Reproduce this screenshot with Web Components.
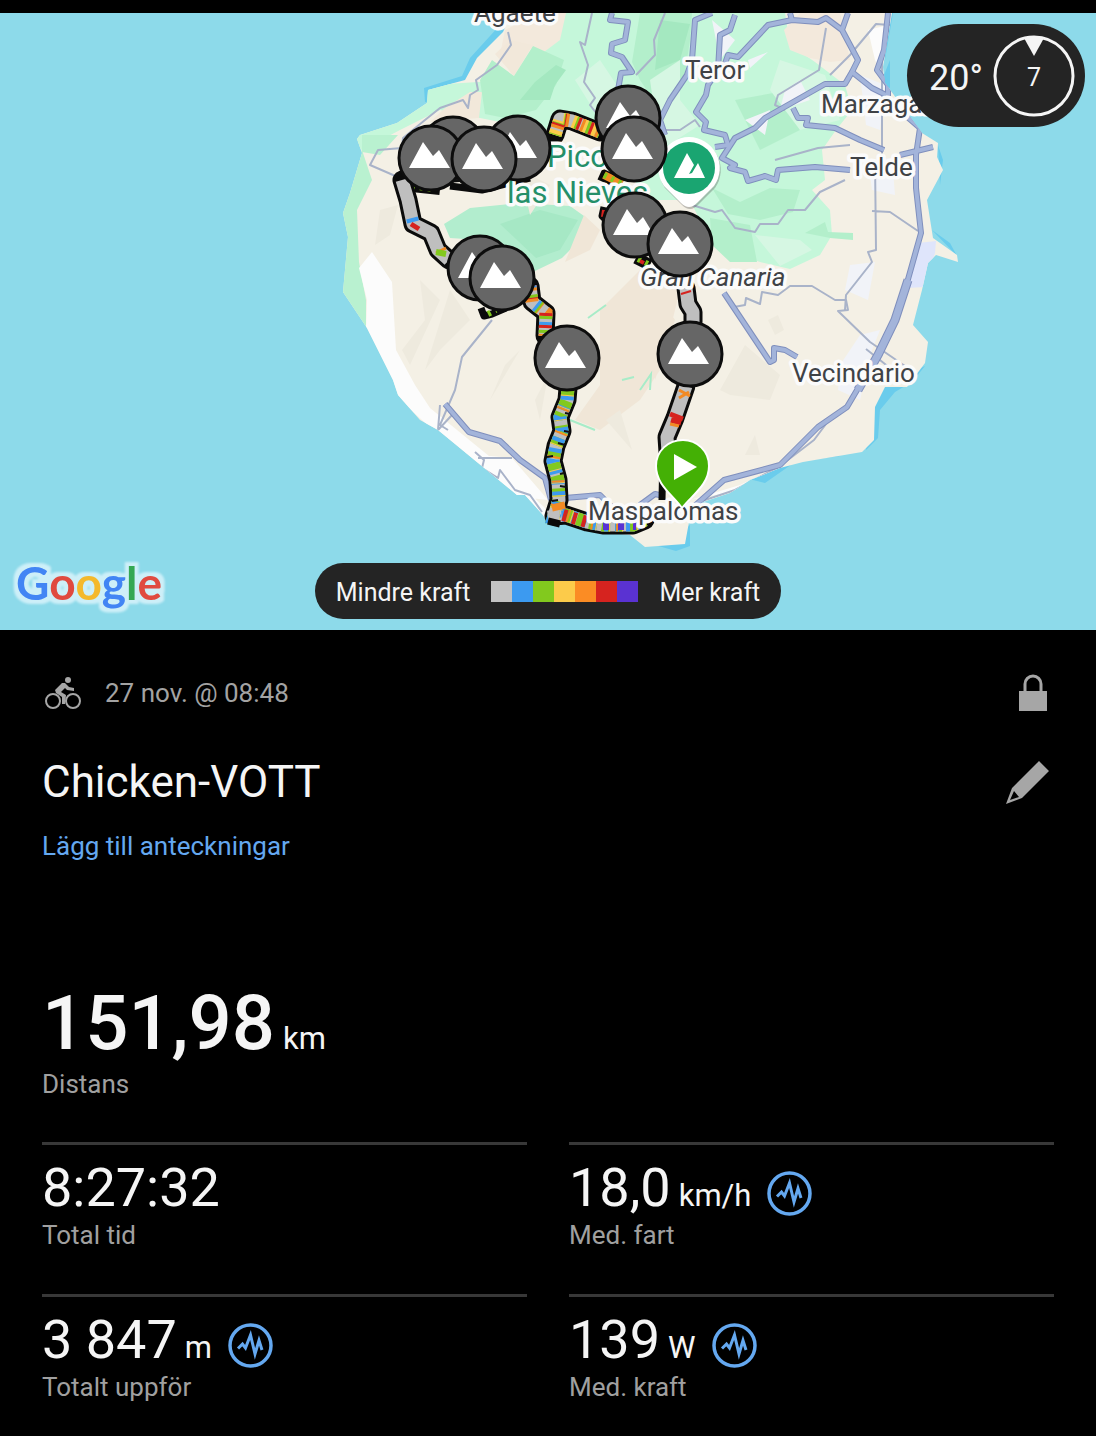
<!DOCTYPE html>
<html lang="sv">
<head>
<meta charset="utf-8">
<meta name="viewport" content="width=device-width, initial-scale=1">
<title>Chicken-VOTT</title>
<style>
  body {
    margin: 0;
    background: #000;
    color: #f5f5f5;
    font-family: Roboto, "Liberation Sans", sans-serif;
  }
</style>
</head>
<body>
<activity-page>
  <activity-map slot="map">
    <weather-badge slot="weather" wind="7">20°</weather-badge>
    <power-legend slot="legend">
      <span slot="less">Mindre kraft</span>
      <span slot="more">Mer kraft</span>
    </power-legend>
  </activity-map>
  <activity-header>
    <span slot="date">27 nov. @ 08:48</span>
    <span slot="title">Chicken-VOTT</span>
    <span slot="notes">Lägg till anteckningar</span>
  </activity-header>
  <metric-grid>
    <metric-cell large unit="km" label="Distans">151,98</metric-cell>
    <metric-cell label="Total tid">8:27:32</metric-cell>
    <metric-cell unit="km/h" label="Med. fart" chart>18,0</metric-cell>
    <metric-cell unit="m" label="Totalt uppför" chart>3 847</metric-cell>
    <metric-cell unit="W" label="Med. kraft" chart>139</metric-cell>
  </metric-grid>
</activity-page>

<script>
class ActivityPage extends HTMLElement {
  constructor() {
    super();
    this.attachShadow({ mode: 'open' }).innerHTML = `
      <style>
        :host { display: block; padding-top: 13px; }
        main { padding: 40px 42px 0; }
      </style>
      <slot name="map"></slot>
      <main><slot></slot></main>
    `;
  }
}

/* route pieces, the power colours are dashed over each one */
const ROUTES = [
  'M402 180 L408 200 L413 224 L431 233 L438 250 L449 260',
  'M530 286 L532 302 L546 313 L545 336',
  'M568 388 L567 400 L560 417 L562 431 L556 446 L553 461 L558 480 L559 500 L554 516 L566 515 L587 522 L603 525 L633 525 L645 520',
  'M686 386 L675 418 L667 437 L668 452',
  'M686 288 L688 304 L693 312 L693 322',
  'M555 135 L560 119 L572 121 L600 132',
];

const STRIPES = [
  [1, '#f28a24', '5 6', 0], [1, '#d6231f', '3 9', 2], [1, '#82c91e', '3 11', 5], [1, '#3c9af0', '3 19', 1],
  [2, '#82c91e', '8 5', 0], [2, '#3c9af0', '4 7', 3], [2, '#fccb4a', '1 12', 6], [2, '#f28a24', '2 23', 4],
  [5, '#fccb4a', '5 5', 0], [5, '#82c91e', '4 8', 3], [5, '#d6231f', '3 10', 4], [5, '#f28a24', '3 13', 9],
];

const MARKERS = [
  [453, 149], [518, 148], [431, 158], [484, 159], [628, 118], [634, 149],
  [480, 268], [502, 278], [635, 225], [680, 244], [567, 358], [690, 354],
];

const LABELS = [
  [474, 22, 'Agaete'], [685, 79, 'Teror'], [821, 113, 'Marzagán'], [850, 176, 'Telde'],
  [792, 382, 'Vecindario'], [588, 520, 'Maspalomas'],
];

class ActivityMap extends HTMLElement {
  constructor() {
    super();
    this.attachShadow({ mode: 'open' });
  }

  connectedCallback() {
    this.render();
  }

  route(d, i) {
    const stripes = STRIPES.filter((s) => s[0] === i)
      .map(([, color, dash, offset]) => `<path d="${d}" stroke="${color}" stroke-width="13" stroke-dasharray="${dash}" stroke-dashoffset="${offset}"/>`)
      .join('');
    return `
      <path d="${d}" stroke="#0b0b0b" stroke-width="19" stroke-linejoin="round" stroke-linecap="round"/>
      <path d="${d}" stroke="#bfbfbf" stroke-width="13" stroke-linejoin="round"/>
      ${stripes}`;
  }

  render() {
    const markers = MARKERS.map(([x, y]) => `<use href="#climb" x="${x}" y="${y}"/>`).join('');
    const labels = LABELS.map(([x, y, text]) => `<text x="${x}" y="${y}">${text}</text>`).join('');
    this.shadowRoot.innerHTML = `
      <style>
        :host { display: block; position: relative; background: #8ddaea; }
        svg { display: block; width: 100%; height: auto; }
        .thin { fill: none; stroke: #a9b3c9; stroke-width: 2; stroke-linejoin: round; }
        .roads { fill: none; stroke: #7f8fbd; stroke-width: 6; stroke-linejoin: round; }
        .roads.inner { stroke: #a3b4da; stroke-width: 4; }
        .labels text {
          font-size: 26px;
          fill: #3f4246;
          stroke: #fbfbfb;
          stroke-width: 7px;
          stroke-linejoin: round;
          paint-order: stroke;
        }
        .labels .peak { font-size: 31px; fill: #248f69; }
        .labels .island { font-style: italic; }
        .google {
          font-family: Lato, "Open Sans", sans-serif;
          font-size: 46px;
          font-weight: 700;
          filter: url(#halo);
        }
        .weather { position: absolute; top: 11px; right: 11px; }
        .legend { position: absolute; bottom: 11px; left: 0; right: 0; display: flex; justify-content: center; }
      </style>
      <svg viewBox="0 13 1096 617" role="img" aria-label="Gran Canaria">
        <defs>
          <!-- one halo behind the whole word, so letters do not cover each other -->
          <filter id="halo" x="-10%" y="-30%" width="120%" height="160%" color-interpolation-filters="sRGB">
            <feMorphology in="SourceAlpha" operator="dilate" radius="4" result="wide"/>
            <feGaussianBlur in="wide" stdDeviation="1" result="soft"/>
            <feFlood flood-color="#cdeff8"/>
            <feComposite in2="soft" operator="in" result="back"/>
            <feMerge><feMergeNode in="back"/><feMergeNode in="SourceGraphic"/></feMerge>
          </filter>
          <clipPath id="land"><path id="coast" d="M512 13 L503 32 L477 58 L465 80 L428 90 L427 103 L397 123 L360 135 L357 139 L362 153 L350 193 L343 213 L348 237 L343 292 L367 328 L393 380 L398 395 L420 420 L438 430 L517 495 L525 495 L543 515 L548 523 L573 523 L587 530 L630 535 L645 547 L685 544 L689 522 L703 502 L730 493 L750 480 L780 468 L803 462 L862 452 L874 440 L875 407 L885 387 L907 387 L925 363 L928 342 L913 325 L922 290 L928 263 L936 255 L958 262 L957 255 L933 238 L927 200 L943 170 L937 157 L938 143 L922 133 L885 83 L883 67 L892 13 Z"/></clipPath>
          <g id="climb">
            <circle r="32" fill="#666" stroke="#0d0d0d" stroke-width="3"/>
            <path d="M-22 10 L-8 -16 L2 -2 L8 -8 L19 10 Z" fill="#fff"/>
          </g>
          <g id="highways">
            <path d="M612 13 L610 20 L628 22 L625 40 L612 44 L611 53 L622 57 L632 72 L621 73 L618 90 L630 110 M712 13 L695 20 L692 60 L687 75 L670 100 L660 120 L665 135"/>
            <path d="M735 15 L730 30 L720 35 L718 70 L708 85 L706 95 L696 112 L706 122 L704 130 L725 135 L728 145 L715 147 M722 72 L728 55 L738 57 L768 25 L792 20 L818 22 L826 18 L842 30 L858 60 L852 72 L872 88 L886 95 M790 13 L792 20 M848 13 L842 30"/>
            <path d="M852 72 L845 84 L825 84 L765 118 L755 128 L735 138 L722 158 L735 165 L730 168 L745 172 L748 181 L765 176 L776 180 L778 170 L815 167 L850 170 M793 108 L798 118 L808 118 L806 125 L835 128 L860 140 L884 150 M905 115 L920 128 L916 155 M900 155 L933 147"/>
            <path d="M888 13 L884 50 L877 70 L888 85 L888 96 M916 150 L916 188 L921 233 L905 290 M724 293 L770 362 L774 360 L774 348 L785 350 L797 357"/>
            <path d="M445 404 L469 432 L500 441 L520 460 L545 478 L551 500 M565 498 L600 495 L615 510 M640 505 L655 494 L664 496 M690 510 L724 480 L780 465 L818 427 L847 407 L860 385"/>
          </g>
        </defs>
        <path fill="#6accec" d="M500 25 L470 58 L462 76 L424 88 L425 102 L440 100 L480 70 L510 30 Z M885 60 L893 13 L887 13 Z M880 85 L890 88 L890 60 Z M938 145 L943 160 L940 185 Z M932 230 L950 243 L957 256 Z M925 366 L912 382 L895 392 L880 410 L878 438 L866 450 L873 390 Z M745 478 L765 483 L795 462 L840 456 L830 450 Z M655 545 L676 551 L690 546 L690 525 L680 530 Z"/>
        <use href="#coast" fill="#f4f0e5"/>
        <g clip-path="url(#land)">
          <!-- woods -->
          <path fill="#c5f7da" d="M430 85 L512 80 L560 13 L785 13 L790 45 L815 62 L845 85 L852 110 L836 130 L822 150 L825 180 L812 190 L830 210 L832 235 L820 255 L790 269 L760 262 L712 245 L690 200 L650 200 L610 150 L600 130 L560 112 L550 130 L515 125 L440 110 L400 130 L362 150 L340 140 Z"/>
          <path fill="#f3e9dc" d="M505 30 L540 13 L566 13 L560 40 L540 55 L530 48 L512 75 L500 55 Z M784 30 L800 13 L840 13 L850 60 L830 62 L810 58 L790 50 Z"/>
          <path fill="#f2e8da" d="M495 54 L510 40 L533 45 L514 76 Z M470 92 L482 92 L479 118 L430 122 L445 108 Z"/>
          <path fill="#b3efcb" d="M533 46 L564 60 L556 85 L536 110 L505 118 L485 114 L480 80 L492 60 L514 76 Z M640 13 L692 13 L690 40 L684 80 L660 110 L640 80 L632 62 Z"/>
          <path fill="#a4e8c0" d="M556 65 L566 70 L555 85 L550 100 L520 100 L535 82 Z M660 20 L690 24 L680 60 L655 70 Z"/>
          <path fill="#b3efcb" d="M712 188 L740 202 L770 188 L800 190 L793 212 L760 220 L728 214 Z M710 218 L750 225 L757 262 L730 262 L712 245 Z M805 233 L825 222 L828 232 L853 233 L853 240 L830 238 Z M735 100 L790 90 L800 130 L760 150 Z"/>
          <path fill="#b2edce" d="M444 224 L470 208 L520 203 L570 206 L584 216 L584 236 L562 258 L535 271 L510 262 L480 240 L450 238 Z"/>
          <path fill="#a6e8c5" d="M500 224 L540 210 L578 220 L560 250 L536 258 Z"/>
          <path fill="#b9f1d0" d="M362 150 L372 180 L357 210 L359 262 L366 300 L366 330 L340 295 L340 180 Z M362 135 L398 135 L380 155 L362 152 Z"/>
          <path fill="#d6f7e3" d="M650 80 L680 60 L680 100 L700 125 L660 150 Z M780 60 L825 75 L840 120 L800 130 L770 90 Z M755 235 L800 240 L812 250 L780 266 Z M600 60 L620 90 L600 120 L575 80 Z"/>
          <!-- bare ground and relief -->
          <path fill="#fcfcfc" d="M359 268 L372 252 L392 282 L396 350 L415 385 L430 408 L500 465 L545 508 L545 520 L510 500 L400 400 L366 328 L367 300 Z M480 455 L512 458 L548 500 L530 498 L500 475 Z M868 30 L888 25 L880 70 L875 60 Z M690 500 L740 485 L780 466 L740 490 Z"/>
          <path fill="#f1f3f8" d="M860 75 L885 85 L880 130 L866 125 Z M785 90 L800 80 L810 100 L780 110 Z M868 160 L892 158 L895 195 L872 190 Z M850 265 L875 262 L868 300 L845 290 Z M860 335 L880 330 L872 350 L860 400 L838 390 L840 365 Z M712 20 L735 40 L720 60 Z M748 60 L768 52 L750 68 Z M745 120 L770 110 L765 135 Z"/>
          <path fill="#dfe5fb" d="M918 243 L936 241 L935 253 L924 287 L908 288 Z"/>
          <path fill="#f0e6d7" d="M584 215 L600 230 L590 250 L565 262 Z M600 310 L640 270 L680 290 L660 370 L640 400 L600 430 L575 420 L600 385 Z M655 290 L675 320 L655 380 Z"/>
          <path fill="#eeeade" d="M380 210 L398 205 L390 235 L375 245 Z M420 280 L440 300 L410 365 L402 350 L425 320 Z M450 290 L470 320 L440 350 L425 370 Z M505 365 L520 350 L490 400 Z M535 400 L548 375 L540 420 Z M720 390 L745 345 L780 375 L770 400 L730 395 Z M768 320 L778 315 L784 330 L775 335 Z M745 455 L755 435 L760 455 Z M520 170 L550 185 L530 215 Z M606 420 L620 410 L632 450 Z"/>
          <path fill="none" stroke="#a7ecc8" stroke-width="2" d="M622 380 L634 377 M640 390 L651 374 L650 390 M570 420 L595 430 M588 318 L606 305"/>
          <!-- minor roads -->
          <path class="thin" d="M508 32 L511 45 L497 65 L476 80 L478 90 L470 95 L468 108 L463 100 L440 108 L425 120 L403 138 L402 148 L378 150 L370 165 L400 178"/>
          <path class="thin" d="M592 13 L585 45 L580 42 L588 65 L584 82 L595 98 L590 105 L600 118 M665 13 L654 40 L655 55 L636 75 M492 320 L462 357 L455 390 L440 425 L448 430 M440 405 L438 430 L452 415"/>
          <path class="thin" d="M475 452 L484 460 L482 468 L498 478 L500 470 L515 490 L530 495 L542 512 M478 458 L512 458"/>
          <path class="thin" d="M692 205 L715 212 L722 210 L735 228 L755 232 L760 224 L778 224 L788 210 L805 210 L820 192 L845 180 M875 160 L876 250 L868 252 L872 262 L846 295 L845 310 M872 211 L890 212 L918 231 M826 28 L819 70 L778 95 L775 105 L785 110"/>
          <path class="thin" d="M660 130 L680 130 L695 120 L700 127 M775 160 L818 148 L850 145 M890 25 L876 24 L850 55 L830 75 M882 50 L882 170 M734 307 L745 305 L746 298 L760 304 L762 292 L778 295 L790 286 L812 286 L835 300 L846 300 L848 310 L838 311 L870 342 L905 366 M866 349 L890 368 M826 424 L814 440 L780 466 L735 490 L705 500"/>
          <!-- highways -->
          <use class="roads" href="#highways"/>
          <path fill="none" stroke="#7f8fbd" stroke-width="9" stroke-linejoin="round" d="M908 280 L895 320 L878 355 L858 390"/>
          <use class="roads inner" href="#highways"/>
          <path fill="none" stroke="#a3b4da" stroke-width="7" stroke-linejoin="round" d="M908 280 L895 320 L878 355 L858 390"/>
        </g>
        <g fill="none">
          <path stroke="#0b0b0b" stroke-width="7" stroke-linejoin="round" d="M481 308 L484 316 L492 314 L506 308 M450 186 L482 190 L530 178 M663 450 L662 500 M604 207 L602 216 L608 222"/>
          <path stroke="#0b0b0b" stroke-width="12" d="M600 174 L622 184 M636 258 L650 265 M412 186 L440 189"/>
          <path stroke="#f28a24" stroke-width="8" d="M604 175 L622 184"/>
          <path stroke="#82c91e" stroke-width="6" stroke-dasharray="3 5" d="M604 175 L622 184 M638 259 L650 265 M412 186 L432 189 M488 314 L496 310"/>
          <path stroke="#d6231f" stroke-width="4" d="M604 210 L603 217 M640 261 L644 263"/>
          ${ROUTES.map((d, i) => this.route(d, i)).join('')}
          <path stroke="#3c9af0" stroke-width="12" d="M412 218 L413 222"/>
          <path stroke="#d6231f" stroke-width="5" d="M411 224 L419 229 M670 414 L683 419 M671 420 L681 423"/>
          <path stroke="#d6231f" stroke-width="2" d="M681 294 L691 291"/>
          <path stroke="#f28a24" stroke-width="3" d="M679 390 L690 396 M679 398 L689 392 M670 424 L679 426 M436 253 L446 248"/>
          <path stroke="#82c91e" stroke-width="6" d="M436 252 L446 254"/>
          <path stroke="#bfbfbf" stroke-width="12" d="M553 510 L554 517 L559 516"/>
          <path stroke="#f28a24" stroke-width="7" d="M552 508 L565 505"/>
          <path stroke="#d6231f" stroke-width="12" stroke-dasharray="4 6" d="M563 515 L587 522"/>
          <path stroke="#5a32d2" stroke-width="10" stroke-dasharray="6 9" d="M603 525 L636 525"/>
          <path stroke="#111" stroke-width="2" d="M565 413 L570 414 M564 431 L570 432 M558 443 L565 445 M547 457 L553 456 M560 474 L564 473 M560 486 L566 487 M558 500 L552 501"/>
          <path stroke="#0b0b0b" stroke-width="7" d="M548 521 L560 524"/>
        </g>
        <g class="labels">
          <text class="peak" x="547" y="167">Pico de</text>
          <text class="peak" x="507" y="203">las Nieves</text>
          ${labels}
          <text class="island" x="640" y="286">Gran Canaria</text>
        </g>
        <g>
          <path d="M689 137 A31 31 0 0 1 714 186 L697 203 Q689 211 681 203 L664 186 A31 31 0 0 1 689 137 Z" fill="#555" opacity=".35" transform="translate(1 2)"/>
          <path d="M689 137 A31 31 0 0 1 714 186 L697 203 Q689 211 681 203 L664 186 A31 31 0 0 1 689 137 Z" fill="#fff"/>
          <circle cx="689" cy="168" r="26" fill="#1aa571"/>
          <path d="M674 178 L687 153 L694 165 L689 174 L692 173 L698 163 L705 178 Z" fill="#fff"/>
        </g>
        ${markers}
        <path d="M683 440 C668 440 656 451 656 466 C656 485 673 495 682 508 C692 495 709 485 709 466 C709 451 697 440 683 440 Z" fill="#44b005" stroke="#fff" stroke-width="2"/>
        <path d="M674 454 L697 467 L674 480 Z" fill="#fff"/>
        <text class="google" x="16" y="600"><tspan fill="#4285f4">G</tspan><tspan fill="#e04a3f">o</tspan><tspan fill="#f4b92c">o</tspan><tspan fill="#4285f4">g</tspan><tspan fill="#34a853">l</tspan><tspan fill="#e04a3f">e</tspan></text>
      </svg>
      <div class="weather"><slot name="weather"></slot></div>
      <div class="legend"><slot name="legend"></slot></div>
    `;
  }
}

class WeatherBadge extends HTMLElement {
  constructor() {
    super();
    this.attachShadow({ mode: 'open' }).innerHTML = `
      <style>
        :host {
          display: flex;
          align-items: center;
          gap: 10px;
          box-sizing: border-box;
          height: 103px;
          padding: 0 9px 0 22px;
          border-radius: 52px;
          background: #242424;
          font-size: 36px;
          line-height: 44px;
        }
        .temp { padding-top: 4px; }
        svg { display: block; width: 83px; height: 83px; }
        text { font-size: 25px; fill: #f5f5f5; text-anchor: middle; }
      </style>
      <span class="temp"><slot></slot></span>
      <svg viewBox="0 0 83 83">
        <circle cx="41" cy="42" r="39" fill="none" stroke="#f5f5f5" stroke-width="3"/>
        <path d="M31 4 Q41 0 51 4 L41 22 Z" fill="#f5f5f5"/>
        <text x="41" y="52">${this.getAttribute('wind')}</text>
      </svg>
    `;
  }
}

class PowerLegend extends HTMLElement {
  constructor() {
    super();
    const colors = ['#c3c3c3', '#3c9af0', '#82c91e', '#fccb4a', '#fb8c24', '#d6231f', '#5a32d2'];
    this.attachShadow({ mode: 'open' }).innerHTML = `
      <style>
        :host {
          display: flex;
          align-items: center;
          gap: 21px;
          height: 56px;
          padding: 0 21px;
          border-radius: 28px;
          background: #242424;
          font-size: 25px;
          line-height: 32px;
        }
        slot { display: block; padding-top: 4px; }
        .scale { display: flex; }
        i { width: 21px; height: 21px; }
      </style>
      <slot name="less"></slot>
      <span class="scale">${colors.map((c) => `<i style="background:${c}"></i>`).join('')}</span>
      <slot name="more"></slot>
    `;
  }
}

class ActivityHeader extends HTMLElement {
  constructor() {
    super();
    this.attachShadow({ mode: 'open' }).innerHTML = `
      <style>
        :host { display: block; }
        .row { display: flex; align-items: center; }
        .date { gap: 23px; height: 46px; font-size: 26px; line-height: 32px; color: #a3a3a3; }
        .title { margin-top: 38px; }
        h1 { margin: 0; font-weight: 400; font-size: 44px; line-height: 56px; }
        a { display: inline-block; margin-top: 20px; font-size: 26px; line-height: 32px; color: #64a8f0; text-decoration: none; }
        button { margin: 0 0 0 auto; padding: 0; border: 0; background: none; color: #a6a6a6; cursor: pointer; }
        svg { display: block; }
      </style>
      <div class="row date">
        <svg width="40" height="36" viewBox="0 0 40 36" fill="none" stroke="#a6a6a6">
          <circle cx="11" cy="26" r="7" stroke-width="2"/>
          <circle cx="31" cy="26" r="7" stroke-width="2"/>
          <circle cx="26" cy="5" r="3" fill="#a6a6a6" stroke="none"/>
          <path d="M13 15 L20 8 L23 8 L27 12 L32 13 L32 16 L25 15 L23 13 L19 17 L24 20 L23 29 L20 29 L20 22 L14 18 Z" fill="#a6a6a6" stroke="none"/>
        </svg>
        <slot name="date"></slot>
        <button type="button" aria-label="Sekretess">
          <svg width="54" height="44" viewBox="0 0 54 44">
            <path d="M25 21 V13 A8 8 0 0 1 41 13 V21" fill="none" stroke="currentColor" stroke-width="3"/>
            <path d="M19 20 H47 V40 H19 Z" fill="currentColor"/>
          </svg>
        </button>
      </div>
      <div class="row title">
        <h1><slot name="title"></slot></h1>
        <button type="button" aria-label="Redigera">
          <svg width="54" height="44" viewBox="0 0 54 44" fill="currentColor">
            <path fill-rule="evenodd" d="M39 1 L49 11 L22 38 L6 44 L12 28 Z M14 31 L10 40 L19 37 Z"/>
          </svg>
        </button>
      </div>
      <a href="#notes"><slot name="notes"></slot></a>
    `;
  }
}

class MetricGrid extends HTMLElement {
  constructor() {
    super();
    this.attachShadow({ mode: 'open' }).innerHTML = `
      <style>
        :host {
          display: grid;
          grid-template-columns: 1fr 1fr;
          column-gap: 42px;
          margin-top: 117px;
        }
        ::slotted([large]) { grid-column: 1 / -1; }
      </style>
      <slot></slot>
    `;
  }
}

class MetricCell extends HTMLElement {
  constructor() {
    super();
    this.attachShadow({ mode: 'open' });
  }

  connectedCallback() {
    this.render();
  }

  render() {
    const unit = this.getAttribute('unit');
    const label = this.getAttribute('label');
    this.shadowRoot.innerHTML = `
      <style>
        :host { display: block; padding: 15px 0 43px; border-top: 3px solid #383838; }
        .value { display: flex; align-items: baseline; gap: 8px; font-size: 54px; line-height: 56px; }
        .unit { font-size: 31px; line-height: 40px; }
        .label { margin-top: 3px; font-size: 26px; line-height: 32px; color: #a0a0a0; }
        button { align-self: flex-end; margin: 0 0 0 8px; padding: 0; border: 0; background: none; cursor: pointer; }
        svg { display: block; width: 45px; height: 45px; fill: none; stroke: #64a8f0; }
        :host([large]) { padding: 0 0 42px; border: 0; }
        :host([large]) .value { font-size: 76px; line-height: 88px; font-weight: 500; }
        :host([large]) .unit { font-weight: 400; }
        :host([large]) .label { margin-top: 1px; }
      </style>
      <div class="value">
        <slot></slot>
        ${unit ? `<span class="unit">${unit}</span>` : ''}
        ${this.hasAttribute('chart') ? `
        <button type="button" aria-label="${label}">
          <svg viewBox="0 0 90 90">
            <circle cx="45" cy="45" r="41" stroke-width="7"/>
            <path d="M20 51 L29 42 L35 50 L45 24 L54 62 L62 35 L68 54" stroke-width="6"/>
          </svg>
        </button>` : ''}
      </div>
      <div class="label">${label}</div>
    `;
  }
}

customElements.define('activity-page', ActivityPage);
customElements.define('activity-map', ActivityMap);
customElements.define('weather-badge', WeatherBadge);
customElements.define('power-legend', PowerLegend);
customElements.define('activity-header', ActivityHeader);
customElements.define('metric-grid', MetricGrid);
customElements.define('metric-cell', MetricCell);
</script>
</body>
</html>
